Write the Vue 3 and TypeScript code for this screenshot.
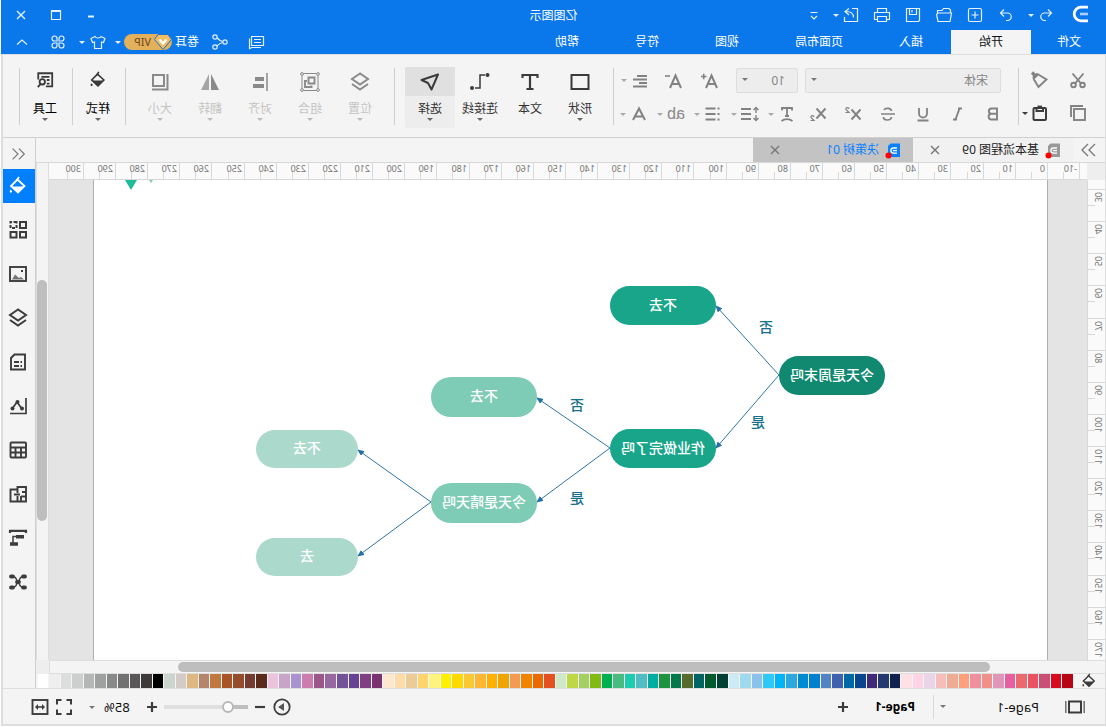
<script setup lang="ts">
import { ref } from 'vue'

interface Tick { pos: number; label: string; major: boolean }
interface MapNode { text: string; x: number; y: number; w: number; h: number; color: string }

const icons: Record<string, string> = {
  logo: '<path d="M3 3.2h7a6.8 6.8 0 0 1 0 13.6H3" stroke-width="2.8"/><path d="M3 10h8" stroke="#a9d0ff" stroke-width="2.6"/>',
  undo: '<path d="M8 4.500L4.500 8L8 11.500M4.500 8H11.500a3.700 3.700 0 0 1 0 7.500H10"/>',
  redo: '<path d="M12 4.500L15.500 8L12 11.500M15.500 8H8.500a3.700 3.700 0 0 0 0 7.500H10"/>',
  add: '<rect x="3.500" y="3.500" width="13" height="13" rx="1.500"/><path d="M10 6.500v7M6.500 10h7"/>',
  folder: '<path d="M16.500 8V5.500h-4.500l-1.500-2H5L3.500 5v2.500M2.500 8h13.500l1.500 1.500l-1.500 7H4z"/>',
  save: '<path d="M3.500 3.500h13v13h-12l-1-1zM6.500 3.500v6h7v-6M11 5v2.500"/>',
  print: '<path d="M5.500 7.500v-4h9v4M5.500 14.500h-3v-7h15v7h-3M5.500 11.500h9v5h-9z"/>',
  share: '<path d="M9 3.500H3.500v13h13V12M7.500 12.500c0-4 2.500-6 7.500-6M12 3.500l4 3l-4 3.500"/>',
  more: '<path d="M6.500 7.500h7M7 11l3 3l3-3"/>',
  min: '<path d="M7 11.500h6" stroke-width="2"/>',
  max: '<path d="M5.500 5.500h9v9h-9zM5.500 6.500h9"/>',
  close: '<path d="M6 6l8 8M14 6l-8 8" stroke-width="1.400"/>',
  message: '<path d="M3.500 4.500h12v9h-12zM6 7.500h7M6 10.500h7M17.500 6.500v10l-2.500-1H6"/>',
  nodes: '<circle cx="15" cy="5" r="2.200"/><circle cx="5" cy="10" r="2.200"/><circle cx="15" cy="15" r="2.200"/><path d="M7.200 9.500C10 9 11 8 13 6M7.200 10.500c3 .500 4 1.500 6 3.500"/>',
  shirt: '<path d="M7 4.500L3 6.500l1.500 4l2-.5v6.500h7v-6.500l2 .5l1.500-4l-4-2c-1 2-5 2-6 0z"/>',
  clover: '<path d="M9 9V6.500A2.500 2.500 0 1 0 6.500 9zM11 9h2.500A2.500 2.500 0 1 0 11 6.500zM9 11H6.500A2.500 2.500 0 1 0 9 13.500zM11 11v2.500A2.500 2.500 0 1 0 13.500 11z"/>',
  up: '<path d="M5 12.500l5-4.500l5 4.500"/>',
  scissors: '<g stroke-width="1.900"><circle cx="5.500" cy="15" r="2.300"/><circle cx="14.500" cy="15" r="2.300"/><path d="M4.500 3.500L13 13.500M15.500 3.500L7 13.500"/></g>',
  copy: '<g stroke-width="1.900"><path d="M5 3h12v11"/><rect x="3" y="6" width="11" height="11"/></g>',
  brush: '<path d="M11 5L3.500 9.500L11.500 17L16 9.500" stroke-width="1.900"/><path d="M10 4l7 6.500l.5-4l-4-3.500z" fill="currentColor" stroke="none"/><path d="M14.500 6l3.500-3.500" stroke-width="3.200"/>',
  paste: '<g stroke-width="2"><rect x="4" y="5" width="12.500" height="12" rx="1"/><path d="M7 5v3h6.500V5" /><path d="M8 3.500h4.500" stroke-width="1.800"/></g>',
  fontUp: '<g stroke-width="2"><path d="M3 17L8.500 4.500L14 17M5 13h7"/><path d="M13.500 5.500h5.500M16.300 2.800v5.500" stroke-width="1.600"/></g>',
  fontDown: '<g stroke-width="2"><path d="M3 17L8.500 4.500L14 17M5 13h7"/><path d="M14 5h5" stroke-width="1.600"/></g>',
  alignPara: '<path d="M3 5h10M3 8.500h14M3 12h8M3 15.500h14" stroke-width="1.900"/>',
  bold: '<path d="M6 4.500h5.500a2.600 2.600 0 0 1 0 5.300H6zM6 9.800h6a2.900 2.900 0 0 1 0 5.700H6z" stroke-width="1.900"/>',
  italic: '<path d="M6 4.500h4M11 15.500h4M8.500 4.500l4 11" stroke-width="1.900"/>',
  underline: '<path d="M6 4v5.500a4 4 0 0 0 8 0V4M4.500 16.500h11" stroke-width="1.800"/>',
  strike: '<path d="M14 6C13 3.800 7 3.600 6.500 7M6.500 13c.500 4 8 4 8 0M3 10h14" stroke-width="1.700"/>',
  sup: '<path d="M2.500 5.500l9 10M11.500 5.500l-9 10" stroke-width="1.900"/><path d="M14 5c.3-2 3.500-1.600 3 .4L14 8.500h3.500" stroke-width="1.200"/>',
  sub: '<path d="M2.500 4.500l9 10M11.500 4.500l-9 10" stroke-width="1.900"/><path d="M14 13c.3-2 3.500-1.600 3 .4L14 16.500h3.500" stroke-width="1.200"/>',
  textArt: '<path d="M5 6.500v-2.500h10v2.500M10 4v8M8 12h4M4.500 17c3-2.500 8-2.500 11 0" stroke-width="1.800"/>',
  spacing: '<path d="M9 5h10M9 10h10M9 15h10" stroke-width="1.800"/><path d="M4 4v5M4 11v5M1.500 6l2.500-2.500L6.500 6M1.500 14l2.500 2.500l2.500-2.500" stroke-width="1.400"/>',
  list: '<path d="M3.500 4.500h2M3.500 10h2M3.500 15.500h2M7.500 4.500h10M7.500 10h10M7.500 15.500h10" stroke-width="1.900"/>',
  colorA: '<path d="M4 16L10 4.500L16 16M6 12.500h8" stroke-width="2"/>',
  rect: '<rect x="1.500" y="3" width="17" height="14" stroke-width="2"/>',
  text: '<path d="M2.500 6V3h15v3M10 3v14M6.500 17h7" stroke-width="2.200"/>',
  connector: '<path d="M5 3h5v13h5" stroke-width="1.500"/><circle cx="2.500" cy="3" r="2" fill="currentColor" stroke="none"/><circle cx="18" cy="16" r="2" fill="currentColor" stroke="none"/>',
  arrow: '<path d="M2 2.500l16.500 5.500l-6.500 3l-3.500 6.500z" stroke-width="2" stroke-linejoin="round"/>',
  layers: '<path d="M10 1.500l8 5.500l-8 5.500L2 7zM2 12l8 5.500l8-5.500" stroke-width="2"/>',
  group: '<path d="M2 1.500h16v17H2z" stroke-width="1"/><g stroke-width="1.900"><path d="M5.500 5.500h6v6h-6zM13 9h2v6H8.500V13.500"/></g><g fill="#f4f4f4" stroke-width="1"><circle cx="2" cy="2" r="1.400"/><circle cx="18" cy="2" r="1.400"/><circle cx="2" cy="18" r="1.400"/><circle cx="18" cy="18" r="1.400"/></g>',
  align: '<path d="M3 1v18" stroke-width="1.500"/><path d="M6 7h9M6 14h11" stroke-width="4"/>',
  flip: '<path d="M9 2v16H1z" fill="currentColor" stroke="none"/><path d="M11 2v16h8z" fill="currentColor" opacity=".75" stroke="none"/>',
  size: '<g stroke-width="2"><rect x="6" y="3" width="11" height="11"/><path d="M2.500 2v15.500H18"/></g>',
  bucket: '<g stroke-width="1.800"><path d="M10.500 3.500L17 10l-7 6.500L3.500 10z"/><path d="M9 1l2.500 3.500" /></g><path d="M3.500 10.500h13.500l-7 6.500z" fill="currentColor" stroke="none"/><path d="M17.500 13.500c2.500 4-2 4-1.500 1.500z" fill="currentColor" stroke="none"/>',
  tools: '<g stroke-width="2"><path d="M9 17H2V2.500h15.500v7M5 6.500h9M5 10h3M5 14h3"/><circle cx="13" cy="12" r="3"/><path d="M15 14.500l3 3.500"/></g>',
  collapse: '<path d="M9 4l-6 6l6 6M16 4l-6 6l6 6" stroke-width="1.300"/>',
  expand: '<path d="M4 4l6 6l-6 6M11 4l6 6l-6 6" stroke-width="1.300"/>',
  doc: '<path d="M4 3.500h9.500l2.500 2.500v11H4z" fill="currentColor" stroke="none"/><path d="M7 8h3.500a2.600 2.600 0 0 1 0 5.200H7M7 10.600h4" stroke="#fff" stroke-width="1.300"/><circle cx="15.500" cy="15.500" r="3" fill="#f00" stroke="none"/>',
  grid: '<g stroke-width="2"><rect x="2" y="2" width="6" height="6"/><rect x="2" y="12" width="6" height="5.500"/><rect x="11.500" y="12" width="6" height="5.500"/><rect x="11.500" y="2" width="6" height="6" stroke-dasharray="3 1.500"/></g>',
  image: '<rect x="2" y="3" width="16" height="14" stroke-width="1.900"/><path d="M4 15.500l3-2.500l2 1l4-3.500l3 5z" fill="#777" stroke="none"/><path d="M5 7h2" stroke-width="1.800"/>',
  page: '<g stroke-width="1.900"><path d="M3 2.500h10.500l3.500 3.500v11.500H3z"/><path d="M6 10h1.500M9 10h5M6 14h1.500M9 14h5"/></g>',
  chart: '<g stroke-width="1.700"><path d="M2 2v15.500h16M6 13l5-7l5 7"/></g><g fill="currentColor" stroke="none"><circle cx="6" cy="12.500" r="2"/><circle cx="10.500" cy="6" r="2"/><circle cx="15.500" cy="12.500" r="2"/></g>',
  table: '<g stroke-width="1.900"><rect x="2" y="2.500" width="15.500" height="15" rx="1"/><path d="M2 7.500h15.500M2 12.500h15.500M7 7.500v10M12.500 7.500v10"/></g>',
  plan: '<g stroke-width="1.900"><path d="M2 3h8.500v2.500h7v12H2zM2 8h4M2 12.500h5M7 12v5M10.500 5v4M10.500 12v5M8 10.500h6"/></g>',
  timeline: '<path d="M2 5V2.800h16V5" stroke-width="2.200"/><path d="M11.500 8.500H15v8" stroke-width="1.500"/><path d="M4 8.800h8M10 16h8" stroke-width="3.400"/>',
  mindmap: '<path d="M4 4.500c6 0 4 5.500 6 5.500s0-5.500 6-5.500M4 15.500c6 0 4-5.500 6-5.500s0 5.500 6 5.500" stroke-width="1.500"/><path d="M3 4.500h2M15 4.500h2M3 15.500h2M15 15.500h2M9 10h2" stroke-width="3.800" stroke-linecap="round"/>',
  pages: '<rect x="4" y="4.500" width="12" height="11" stroke-width="2"/><path d="M.8 4v12M19.200 4v12" stroke="#777" stroke-width="1.600"/>',
  plus: '<path d="M10 5v10M5 10h10" stroke-width="2.200"/>',
  minus: '<path d="M5 10h10" stroke-width="2.200"/>',
  play: '<circle cx="10" cy="10" r="7.700" stroke-width="1.800"/><path d="M8 6l6 4l-6 4z" fill="#555" stroke="none"/>',
  full: '<path d="M3 7.500V3h4.500M12.500 3H17v4.500M17 12.500V17h-4.500M7.500 17H3v-4.500" stroke-width="2"/>',
  fit: '<rect x="2.500" y="3" width="15" height="14" stroke-width="1.900"/><path d="M6 10h8" stroke-width="1.600"/><path d="M8 7l-3 3l3 3zM12 7l3 3l-3 3z" fill="currentColor" stroke="none"/>',
}

const quick = [['redo', '恢复'], ['add', '新建'], ['folder', '打开'], ['save', '保存'], ['print', '打印']]
const menus = ['文件', '开始', '插入', '页面布局', '视图', '符号', '帮助']
const activeMenu = ref('开始')
const fontPlain = [['bold', '加粗'], ['italic', '斜体'], ['underline', '下划线'], ['strike', '删除线'], ['sup', '上标'], ['sub', '下标']]
const fontDrop = [['textArt', '艺术字'], ['spacing', '行距'], ['list', '列表'], ['ab', '大小写'], ['colorA', '字体颜色']]
const groups = [
  { cls: 'g1', tools: [
    { icon: 'rect', label: '形状', drop: true }, { icon: 'text', label: '文本', drop: false },
    { icon: 'connector', label: '连接线', drop: true }, { icon: 'arrow', label: '选择', drop: true } ] },
  { cls: 'g2', tools: [
    { icon: 'layers', label: '位置', drop: true }, { icon: 'group', label: '组合', drop: true },
    { icon: 'align', label: '对齐', drop: true }, { icon: 'flip', label: '翻转', drop: true },
    { icon: 'size', label: '大小', drop: true } ] },
  { cls: 'g3', tools: [{ icon: 'bucket', label: '样式', drop: true }] },
  { cls: 'g3', tools: [{ icon: 'tools', label: '工具', drop: true }] },
]
const side = [['bucket', '样式'], ['grid', '符号库'], ['image', '图片'], ['layers', '图层'], ['page', '页面'], ['chart', '图表'], ['table', '表格'], ['plan', '平面图'], ['timeline', '时间线'], ['mindmap', '导图']]
const activeSide = ref('bucket')
const docs = ['基本流程图 09', '决策树 01']
const activeDoc = ref(docs[1])
const zoom = ref(19)

// One drawing unit spans 3.213 screen pixels at the current zoom level.
const unit = 3.213
function ticks(from: number, space: number, origin: number): Tick[] {
  const out: Tick[] = []
  for (let v = from; origin + (v - from) * unit < space; v += 5) {
    out.push({ pos: Math.round(origin + (v - from) * unit), label: String(v), major: v % 10 === 0 })
  }
  return out
}
const hTicks = ticks(-10, window.innerWidth - 86, 7)
const vTicks = ticks(30, window.innerHeight - 258, 9)

const nodes: MapNode[] = [
  { text: '今天是周末吗', x: 162, y: 176, w: 106, h: 39, color: '#118870' },
  { text: '不去', x: 331, y: 106, w: 106, h: 39, color: '#18a58a' },
  { text: '作业做完了吗', x: 331, y: 249, w: 106, h: 39, color: '#18a58a' },
  { text: '不去', x: 510, y: 197, w: 106, h: 40, color: '#7fccb6' },
  { text: '今天是晴天吗', x: 510, y: 303, w: 106, h: 40, color: '#7fccb6' },
  { text: '不去', x: 689, y: 250, w: 102, h: 38, color: '#abd9cc' },
  { text: '去', x: 689, y: 358, w: 102, h: 38, color: '#abd9cc' },
]
const edges = [
  [268, 195, 331, 126], [268, 195, 331, 268], [437, 268, 510, 218],
  [437, 268, 510, 322], [616, 322, 689, 270], [616, 322, 689, 376],
]
const notes = [
  { text: '否', x: 274, y: 137 }, { text: '是', x: 282, y: 232 },
  { text: '否', x: 463, y: 215 }, { text: '是', x: 463, y: 308 },
]
const swatches = ('b60615 d90b1e c94f75 e95464 e9696f e85fa0 e096b8 f0908a f08f9d ffa07a f0ab95 f6bdbb ead4e8 ffd3e6 ffe0e5 '
  + '11224e 23396f 41297a 08458e 0068a5 4062ae 5383c5 0080cc 008ad1 2ea7e0 00b5f5 2fc9f9 8bc2ec 9fd9ef cdebf7 '
  + '004035 005a2e 006464 566b2b 007849 1f9440 00ada0 50bdc3 1accb0 48bb80 00b050 80ba12 a4d063 bdd844 cfe8c8 '
  + 'e45020 ec6800 f08300 f39b52 f0a400 ffb000 ffb733 fac832 ffd900 fff000 fff380 ffd36e eccc96 ffdba8 fde8cf '
  + '7b3270 813f83 664196 745298 96689f 9b578a cc7caf a892cf c7a5c8 ebc3dc 5a2a1c 753a30 954c2a a95427 c1783e '
  + 'b5856b dfb781 d4cbc6 cbd5cd 000000 3e3a39 595757 727171 898989 9fa0a0 b5b6b6 cdcece dcdddd eeeeee ffffff').split(' ')
</script>

<template>
  <div class="app">
    <header class="top">
      <div class="titlebar">
        <span class="logo"><svg class="ic" viewBox="0 0 20 20" v-html="icons.logo" /></span>
        <div class="quick">
          <div class="pair">
            <button class="ib" aria-label="撤销"><svg class="ic" viewBox="0 0 20 20" v-html="icons.undo" /></button>
            <button class="cb" aria-label="撤销列表"><i class="caret" /></button>
          </div>
          <button v-for="q in quick" :key="q[0]" class="ib" :aria-label="q[1]"><svg class="ic" viewBox="0 0 20 20" v-html="icons[q[0]]" /></button>
          <div class="pair">
            <button class="ib" aria-label="导出"><svg class="ic" viewBox="0 0 20 20" v-html="icons.share" /></button>
            <button class="cb" aria-label="导出选项"><i class="caret" /></button>
          </div>
          <button class="ib slim" aria-label="更多"><svg class="ic" viewBox="0 0 20 20" v-html="icons.more" /></button>
        </div>
        <h1>亿图图示</h1>
        <div class="win">
          <button class="ib" aria-label="最小化"><svg class="ic" viewBox="0 0 20 20" v-html="icons.min" /></button>
          <button class="ib" aria-label="最大化"><svg class="ic" viewBox="0 0 20 20" v-html="icons.max" /></button>
          <button class="ib" aria-label="关闭"><svg class="ic" viewBox="0 0 20 20" v-html="icons.close" /></button>
        </div>
      </div>
      <div class="menubar">
        <nav>
          <button v-for="m in menus" :key="m" class="menu" :class="{ on: activeMenu === m }" @click="activeMenu = m">{{ m }}</button>
        </nav>
        <div class="account">
          <button class="ib" aria-label="消息"><svg class="ic" viewBox="0 0 20 20" v-html="icons.message" /></button>
          <button class="ib share" aria-label="分享"><svg class="ic" viewBox="0 0 20 20" v-html="icons.nodes" /></button>
          <a href="#" class="user">卷耳</a>
          <button class="vip">
            <svg viewBox="0 0 18 16" class="gem"><path d="M4 .5h10l3.500 5L9 15.500L.5 5.500z" fill="#f0bd62" stroke="#1b72c9" /><path d="M5.500 5.500L9 9.500l3.500-4" fill="none" stroke="#fff" stroke-width="2.200" /></svg>
            <span>VIP</span>
          </button>
          <button class="cb" aria-label="账户"><i class="caret" /></button>
          <button class="ib theme" aria-label="主题"><svg class="ic" viewBox="0 0 20 20" v-html="icons.shirt" /></button>
          <button class="cb" aria-label="主题列表"><i class="caret" /></button>
          <button class="ib apps" aria-label="应用"><svg class="ic" viewBox="0 0 20 20" v-html="icons.clover" /></button>
          <button class="ib" aria-label="收起功能区"><svg class="ic" viewBox="0 0 20 20" v-html="icons.up" /></button>
        </div>
      </div>
    </header>

    <div class="frame">
      <section class="ribbon">
        <div class="clip">
          <div class="row">
            <button class="ib" aria-label="剪切"><svg class="ic" viewBox="0 0 20 20" v-html="icons.scissors" /></button>
            <button class="ib" aria-label="格式刷"><svg class="ic" viewBox="0 0 20 20" v-html="icons.brush" /></button>
          </div>
          <div class="row">
            <button class="ib" aria-label="复制"><svg class="ic" viewBox="0 0 20 20" v-html="icons.copy" /></button>
            <div class="pair dark">
              <button class="ib" aria-label="粘贴"><svg class="ic" viewBox="0 0 20 20" v-html="icons.paste" /></button>
              <button class="cb" aria-label="粘贴选项"><i class="caret" /></button>
            </div>
          </div>
        </div>
        <div class="font">
          <div class="row r1">
            <div class="selects">
              <label class="sel family"><select aria-label="字体"><option>宋体</option></select><i class="caret" /></label>
              <label class="sel points"><select aria-label="字号"><option>10</option></select><i class="caret" /></label>
            </div>
            <button class="ib" aria-label="增大字号"><svg class="ic" viewBox="0 0 20 20" v-html="icons.fontUp" /></button>
            <button class="ib" aria-label="减小字号"><svg class="ic" viewBox="0 0 20 20" v-html="icons.fontDown" /></button>
            <div class="pair">
              <button class="ib" aria-label="段落对齐"><svg class="ic" viewBox="0 0 20 20" v-html="icons.alignPara" /></button>
              <button class="cb" aria-label="对齐选项"><i class="caret" /></button>
            </div>
          </div>
          <div class="row r2">
            <div class="plain">
              <button v-for="f in fontPlain" :key="f[0]" class="ib" :aria-label="f[1]"><svg class="ic" viewBox="0 0 20 20" v-html="icons[f[0]]" /></button>
            </div>
            <div class="drops">
              <div v-for="f in fontDrop" :key="f[0]" class="pair">
                <button class="ib" :aria-label="f[1]">
                  <span v-if="f[0] === 'ab'" class="ab">ab</span>
                  <svg v-else class="ic" viewBox="0 0 20 20" v-html="icons[f[0]]" />
                </button>
                <button class="cb" :aria-label="f[1] + '选项'"><i class="caret" /></button>
              </div>
            </div>
          </div>
        </div>
        <div v-for="(g, i) in groups" :key="i" class="group" :class="g.cls">
          <button v-for="t in g.tools" :key="t.label" class="tool" :class="{ on: t.icon === 'arrow' }" :disabled="g.cls === 'g2'">
            <span class="pic"><svg class="ic" viewBox="0 0 20 20" v-html="icons[t.icon]" /></span>
            <span class="cap">{{ t.label }}</span>
            <i v-if="t.drop" class="caret" />
          </button>
        </div>
      </section>

      <div class="work">
        <main class="main">
          <div class="tabs">
            <button class="ib fold" aria-label="展开左侧面板"><svg class="ic" viewBox="0 0 20 20" v-html="icons.expand" /></button>
            <div v-for="d in docs" :key="d" class="doc" :class="{ on: activeDoc === d }">
              <button class="name" @click="activeDoc = d"><svg class="ic" viewBox="0 0 20 20" v-html="icons.doc" /><span>{{ d }}</span></button>
              <button class="x" aria-label="关闭标签"><svg class="ic" viewBox="0 0 20 20" v-html="icons.close" /></button>
            </div>
          </div>

          <div class="stage">
            <div class="corner" />
            <div class="hruler">
              <div v-for="t in hTicks" :key="t.label" class="tick" :class="{ minor: !t.major }" :style="{ left: t.pos + 'px' }"><span v-if="t.major">{{ t.label }}</span></div>
            </div>
            <div class="vbar"><div class="thumb" /></div>
            <div class="vruler">
              <div v-for="t in vTicks" :key="t.label" class="tick" :class="{ minor: !t.major }" :style="{ top: t.pos + 'px' }"><span v-if="t.major">{{ t.label }}</span></div>
            </div>
            <div class="canvas">
              <div class="sheet">
                <svg class="lines">
                  <defs>
                    <marker id="head" markerWidth="7" markerHeight="6" refX="6" refY="3" orient="auto" markerUnits="userSpaceOnUse"><path d="M0 0L7 3L0 6z" fill="#246fa3" /></marker>
                  </defs>
                  <line v-for="(e, i) in edges" :key="i" :x1="e[0]" :y1="e[1]" :x2="e[2]" :y2="e[3]" stroke="#2f74a8" marker-end="url(#head)" />
                  <path d="M910 0h12l-6 10z" fill="#1fbc9c" />
                  <path d="M894 0h4l-2 3z" fill="#7fccb6" />
                </svg>
                <div v-for="(n, i) in nodes" :key="i" class="node" :style="{ left: n.x + 'px', top: n.y + 'px', width: n.w + 'px', height: n.h + 'px', background: n.color }">{{ n.text }}</div>
                <span v-for="(n, i) in notes" :key="'n' + i" class="note" :style="{ left: n.x + 'px', top: n.y + 'px' }">{{ n.text }}</span>
              </div>
            </div>
            <div class="hbar"><div class="thumb" /></div>
            <div class="corner" />
          </div>

          <div class="palette">
            <span class="fill"><svg class="ic" viewBox="0 0 20 20" v-html="icons.bucket" /></span>
            <div class="swatches"><button v-for="c in swatches" :key="c" class="sw" :aria-label="'#' + c" :style="{ background: '#' + c }" /></div>
          </div>
        </main>

        <aside class="side">
          <button class="toggle" aria-label="收起面板"><svg class="ic" viewBox="0 0 20 20" v-html="icons.collapse" /></button>
          <button v-for="s in side" :key="s[1]" class="panel" :class="{ on: activeSide === s[0] }" :aria-label="s[1]" @click="activeSide = s[0]"><svg class="ic" viewBox="0 0 20 20" v-html="icons[s[0]]" /></button>
        </aside>
      </div>

      <footer class="status">
        <button class="ib" aria-label="页面列表"><svg class="ic" viewBox="0 0 20 20" v-html="icons.pages" /></button>
        <label class="pagesel"><select aria-label="页面"><option>Page-1</option></select><i class="caret" /></label>
        <button class="current">Page-1</button>
        <button class="ib addpage" aria-label="添加页面"><svg class="ic" viewBox="0 0 20 20" v-html="icons.plus" /></button>
        <div class="zoom">
          <button class="ib" aria-label="演示"><svg class="ic" viewBox="0 0 20 20" v-html="icons.play" /></button>
          <button class="ib step" aria-label="缩小"><svg class="ic" viewBox="0 0 20 20" v-html="icons.minus" /></button>
          <input v-model="zoom" type="range" min="0" max="100" aria-label="缩放">
          <button class="ib step" aria-label="放大"><svg class="ic" viewBox="0 0 20 20" v-html="icons.plus" /></button>
          <button class="pct"><span>85%</span><i class="caret" /></button>
          <button class="ib" aria-label="全屏"><svg class="ic" viewBox="0 0 20 20" v-html="icons.full" /></button>
          <button class="ib" aria-label="适合宽度"><svg class="ic" viewBox="0 0 20 20" v-html="icons.fit" /></button>
        </div>
      </footer>
    </div>
  </div>
</template>

<style>
body { margin: 0; background: #fff; overflow: hidden; }
</style>

<style scoped>
.app {
  transform: scaleX(-1);
  min-height: 100vh;
  display: flex;
  flex-direction: column;
  box-sizing: border-box;
  padding: 0 1px 1px 0;
  font: 12px/16px "Noto Sans", "Noto Sans CJK SC", sans-serif;
  color: #222;
}
.app *, .app *::before { box-sizing: border-box; }
button { border: 0; padding: 0; margin: 0; background: none; font: inherit; color: inherit; cursor: pointer; }
.ic { width: 20px; height: 20px; display: block; flex: none; fill: none; stroke: currentColor; stroke-width: 1.2; }
.ib { width: 20px; height: 20px; flex: none; display: flex; align-items: center; justify-content: center; }
.cb { width: 11px; height: 20px; flex: none; display: flex; align-items: center; justify-content: center; }
.pair { display: flex; }
.caret { flex: none; width: 0; height: 0; border: 3px solid transparent; border-bottom: 0; border-top-color: currentColor; }

.top { background: #0a77eb; color: #e4f1ff; }
.titlebar { height: 30px; display: grid; grid-template-columns: 1fr auto 1fr; align-items: center; position: relative; }
.titlebar .logo { position: absolute; left: 15px; top: 4px; color: #fff; }
.quick { display: flex; gap: 11px; padding-left: 50px; }
.quick .cb { width: 9px; }
.slim { width: 14px; }
h1 { margin: 0; padding-top: 2px; font: inherit; color: #fff; }
.win { display: flex; justify-content: flex-end; gap: 15px; padding-right: 10px; }
.menubar { height: 24px; display: flex; justify-content: space-between; }
nav { display: flex; }
.menu { padding: 0 28px; height: 24px; color: #fff; }
.menu:first-child { padding: 0 26px 0 25px; }
.menu.on { background: #f4f4f4; color: #111; }
.account { display: flex; align-items: center; padding-right: 11px; }
.share { margin-left: 17px; }
.user { color: #fff; text-decoration: none; margin: 0 3px 0 11px; }
.vip { height: 16px; width: 48px; border-radius: 8px; background: #e3b05c; color: #6f4719; display: flex; align-items: center; gap: 3px; font-size: 11px; }
.gem { width: 18px; height: 16px; }
.theme { margin-left: 5px; }
.apps { margin: 0 16px 0 9px; }

.frame { flex: 1; display: flex; flex-direction: column; background: #f4f4f4; border: solid #dedede; border-width: 1px 2px 2px 1px; min-width: 0; }
.ribbon { height: 83px; border-bottom: 1px solid #d0d0d0; display: flex; align-items: flex-start; padding-top: 13px; color: #828282; }
.row { display: flex; align-items: center; }
.clip { width: 87px; height: 57px; padding-left: 17px; border-right: 1px solid #cfcfcf; display: flex; flex-direction: column; justify-content: space-between; }
.clip .row { gap: 18px; height: 24px; }
.dark { color: #3c3c3c; }
.clip .cb { width: 10px; }
.font { padding: 0 4px 0 15px; height: 57px; border-right: 1px solid #cfcfcf; display: flex; flex-direction: column; gap: 11px; }
.font .caret { border-top-color: #aaa; }
.r1 { gap: 16px; padding-left: 2px; }
.r1 .pair { margin-left: -2px; }
.selects { display: flex; gap: 7px; }
.sel { position: relative; display: block; height: 25px; }
.sel select { appearance: none; width: 100%; height: 25px; border: 1px solid #dcdde0; border-radius: 2px; background: #ededed; color: #858585; font: inherit; padding: 0 12px; }
.sel .caret { position: absolute; right: 6px; top: 10px; border-top-color: #777; }
.family { width: 196px; }
.points { width: 62px; }
.r2 { gap: 11px; }
.plain { display: flex; gap: 15px; }
.drops { display: flex; gap: 6px; }
.ab { font: 16px/20px "Liberation Sans", sans-serif; color: #8a8a8a; }
.group { display: flex; height: 57px; border-right: 1px solid #cfcfcf; color: #3a3a3a; }
.g1 { padding: 0 10px 0 8px; }
.g2 { padding: 0 9px; }
.g3 { padding: 0 0 0 2px; }
.tool { width: 50px; height: 61px; margin-top: -1px; display: flex; flex-direction: column; align-items: center; color: #3a3a3a; border-radius: 2px; }
.pic { width: 50px; height: 29px; display: flex; align-items: center; justify-content: center; }
.g3 .pic { padding-bottom: 4px; }
.g3 .ic { width: 18px; height: 18px; }
.cap { height: 16px; margin: 5px 0 1px; color: #333; white-space: nowrap; }
.g3 .cap { color: #000; }
.tool .caret { border-top-color: #666; }
.tool.on { background: #ededed; }
.tool.on .pic { background: #e0e0e0; }
.tool:disabled { color: #8a8a8a; }
.tool:disabled .cap { color: #c4c4c4; }
.tool:disabled .caret { border-top-color: #bbb; }

.work { flex: 1; display: flex; min-height: 0; }
.main { flex: 1; min-width: 0; display: flex; flex-direction: column; }
.tabs { height: 25px; display: flex; border-bottom: 1px solid #d8d8d8; }
.fold { width: 32px; height: 24px; color: #777; }
.doc { width: 160px; height: 24px; padding: 0 12px 0 9px; display: flex; align-items: center; justify-content: space-between; background: #f1f1f1; color: #999; }
.name { display: flex; align-items: center; gap: 5px; }
.name span { color: #222; }
.x { color: #777; }
.doc.on { background: #c3c3c3; color: #0a80ff; }
.doc.on .name span { color: #0a80ff; }

.stage { flex: 1; display: grid; grid-template-columns: 18px 1fr 13px; grid-template-rows: 17px 1fr 14px; min-height: 0; }
.corner { background: #eee; }
.hruler { position: relative; overflow: hidden; background: #fafafa; border-bottom: 1px solid #d8d8d8; }
.tick { position: absolute; color: #757575; font: 9px/11px "Noto Sans", sans-serif; }
.hruler .tick { top: 0; bottom: 0; border-left: 1px solid #d8d8d8; padding-left: 2px; }
.hruler .minor { top: 9px; }
.vruler { position: relative; overflow: hidden; background: #fafafa; border-right: 1px solid #d8d8d8; }
.vruler .tick { left: 0; right: 0; border-top: 1px solid #d8d8d8; padding-top: 2px; }
.vruler .minor { left: 10px; }
.vruler span { display: block; writing-mode: vertical-rl; transform: rotate(180deg); width: 11px; margin-left: 1px; }
.vbar { grid-row: 1 / 3; grid-column: 3; border: solid #dedede; border-width: 0 1px; padding: 117px 1px 0; }
.vbar .thumb { width: 10px; height: 241px; border-radius: 5px; background: #bebebe; }
.canvas { background: #e4e4e4; overflow: hidden; display: flex; padding: 0 44px 0 39px; }
.sheet { position: relative; flex: 1; background: #fff; border: solid #b0b0b0; border-width: 0 1px; }
.lines { position: absolute; left: 0; top: 0; width: 100%; height: 100%; }
.node { position: absolute; border-radius: 20px; padding-bottom: 2px; color: #fff; font-size: 14px; font-weight: 500; white-space: nowrap; display: flex; align-items: center; justify-content: center; }
.note { position: absolute; font-size: 14px; line-height: 20px; font-weight: 500; color: #17708a; }
.hbar { grid-column: 1 / 3; border: solid #dedede; border-width: 1px 1px 1px 0; padding: 1px 67px 0 115px; }
.hbar .thumb { height: 10px; border-radius: 5px; background: #bebebe; margin-right: 61px; }
.palette { height: 14px; display: flex; padding-right: 1px; }
.fill { width: 32px; display: flex; align-items: center; justify-content: center; color: #3c3c3c; }
.fill .ic { width: 16px; height: 16px; }
.swatches { flex: 1; display: flex; gap: 1px; }
.sw { flex: 1; min-width: 0; height: 14px; cursor: pointer; }

.side { width: 33px; border-left: 1px solid #d0d0d0; color: #3c3c3c; display: flex; flex-direction: column; gap: 10px; }
.toggle { height: 31px; margin-bottom: -10px; padding-left: 2px; display: flex; align-items: center; justify-content: center; color: #777; }
.toggle .ic { width: 18px; height: 18px; }
.panel { height: 34px; padding-left: 2px; flex: none; display: flex; align-items: center; justify-content: center; }
.panel.on { background: #0080ff; color: #fff; }

.status { height: 36px; border-top: 1px solid #dedede; display: flex; align-items: center; color: #3c3c3c; padding: 1px 27px 0 20px; font-size: 13px; }
.pagesel { position: relative; width: 132px; height: 24px; border-right: 1px solid #d8d8d8; }
.pagesel select { appearance: none; width: 100%; height: 24px; border: 0; background: none; font: inherit; color: #111; padding: 0 0 0 26px; }
.pagesel .caret { position: absolute; right: 6px; top: 10px; border-top-color: #777; }
.current { margin-left: 18px; font-size: 12px; font-weight: 700; color: #000; }
.addpage { margin-left: 22px; }
.zoom { margin-left: auto; display: flex; align-items: center; }
.step { margin: 0 2px; }
.zoom input { appearance: none; width: 84px; height: 14px; margin: 0; background: linear-gradient(90deg, #bebebe 22%, #dfdfdf 22%) center / 100% 4px no-repeat; }
.zoom input::-webkit-slider-thumb { appearance: none; width: 12px; height: 12px; border-radius: 50%; background: #fff; border: 2px solid #b8b8b8; }
.pct { display: flex; align-items: center; gap: 9px; margin: 0 15px 0 10px; color: #111; }
.pct .caret { border-top-color: #777; }
.zoom .ib:last-child { margin-left: 4px; }
</style>
